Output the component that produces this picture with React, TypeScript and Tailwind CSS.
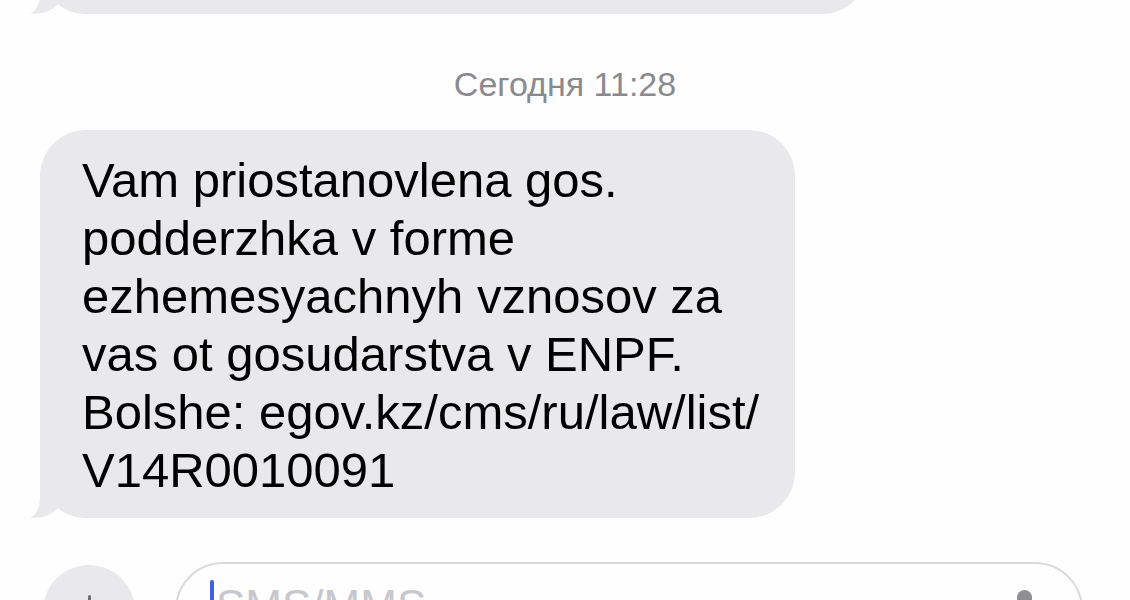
import React from "react";

const lines = [
  "Vam priostanovlena gos.",
  "podderzhka v forme",
  "ezhemesyachnyh vznosov za",
  "vas ot gosudarstva v ENPF.",
  "Bolshe: egov.kz/cms/ru/law/list/",
  "V14R0010091",
];

// Received-bubble tail, sits over the bottom-left corner
function Tail() {
  return (
    <svg
      className="absolute bottom-0 left-[-14px]"
      width="40"
      height="60"
      viewBox="0 0 40 60"
      overflow="visible"
    >
      <path
        d="M14 0 L14 40 Q14 55 4 60 Q22 61 34 49 L34 0 Z"
        fill="#e9e9eb"
      />
    </svg>
  );
}

export default function App() {
  return (
    <main
      className="h-[600px] w-[1130px] overflow-hidden bg-[#fefefe] flex flex-col"
      style={{ fontFamily: '"Liberation Sans", Arial, sans-serif' }}
    >
      {/* Previous message, mostly scrolled off */}
      <div className="pl-[40px]">
        <div className="relative mt-[-86px] h-[100px] w-[828px] rounded-[46px] bg-[#e9e9eb]">
          <Tail />
        </div>
      </div>

      {/* Timestamp */}
      <div className="mt-[50px] text-center text-[34px] leading-[41px] text-[#8a8a8e]">
        Сегодня 11:28
      </div>

      {/* Message bubble */}
      <div className="pl-[40px] mt-[25px]">
        <div className="relative w-[755px] rounded-[46px] bg-[#e9e9eb] pl-[42px] pt-[21px] pb-[19px] text-[49px] leading-[58px] text-black">
          {lines.map((l) => (
            <div key={l} className="whitespace-nowrap">
              {l}
            </div>
          ))}
          <Tail />
        </div>
      </div>

      {/* Composer */}
      <div className="mt-[44px] flex items-start pl-[43px]">
        <div className="mt-[3px] flex h-[92px] w-[92px] shrink-0 justify-center rounded-full bg-[#e9e9eb] pt-[30px]">
          <div className="relative h-[30px] w-[3px] rounded-full bg-[#6e6e73]">
            <div className="absolute left-[-13px] top-[13px] h-[3px] w-[30px] rounded-full bg-[#6e6e73]" />
          </div>
        </div>
        <div className="ml-[40px] flex h-[96px] w-[908px] items-start rounded-[48px] border-2 border-[#dadadc] pl-[33px] pt-[16px]">
          <div className="h-[46px] w-[4px] rounded-full bg-[#3d5fe0]" />
          <span className="ml-[2px] mt-[4px] text-[44px] leading-none text-[#c7c7cc]">
            SMS/MMS
          </span>
          <div className="ml-auto mr-[49px] mt-[10px] h-[34px] w-[15px] rounded-full bg-[#8e8e93]" />
        </div>
      </div>
    </main>
  );
}
